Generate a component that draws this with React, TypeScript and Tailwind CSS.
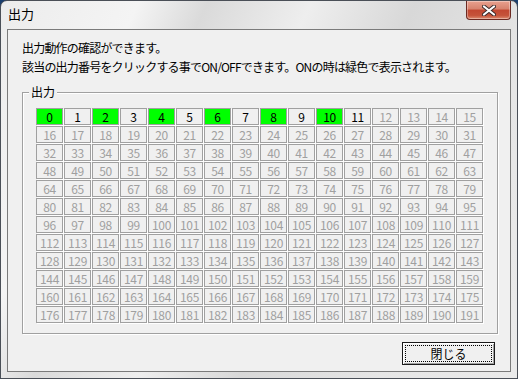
const FONT = { fontFamily: '"Noto Sans CJK JP", "Noto Sans", sans-serif' }

const ON = [0, 2, 4, 6, 8, 10]
const ENABLED = 12

function Cell({ n }: { n: number }) {
  const on = ON.includes(n)
  const enabled = n < ENABLED
  return (
    <div
      className={`flex h-[17px] items-center justify-center border border-[#a0a0a0] text-[12px] leading-none tracking-[-0.3px] shadow-[1px_1px_0_#fff] ${
        on ? 'bg-[#00ff00]' : 'bg-[#f0f0f0]'
      } ${enabled ? 'text-black' : 'text-[#a0a0a0]'}`}
    >
      {n}
    </div>
  )
}

function CloseGlyph() {
  return (
    <svg width="14" height="11" viewBox="0 0 14 11">
      <path d="M2 1.5 L12 9.5 M12 1.5 L2 9.5" stroke="#3a2a2a" strokeWidth="4" strokeLinecap="round" />
      <path d="M2 1.5 L12 9.5 M12 1.5 L2 9.5" stroke="#ffffff" strokeWidth="2.2" strokeLinecap="round" />
    </svg>
  )
}

export default function App() {
  const cells = Array.from({ length: 192 }, (_, i) => i)

  return (
    <div className="h-[379px] w-[518px] bg-[#1b3f6e]" style={FONT}>
      <div className="flex h-full w-full flex-col rounded-t-[7px] border border-[#4a4f57] bg-[linear-gradient(115deg,#ececec_0%,#f4f4f4_20%,#dadada_30%,#eeeeee_45%,#d8d8d8_60%,#e6e6e6_80%,#eaeaea_100%)]">
        {/* title bar */}
        <div className="flex h-[28px] items-start justify-between">
          <span className="pl-[7px] pt-[4px] text-[13px] leading-[18px] text-black">出力</span>
          <button className="mr-[6px] flex h-[19px] w-[45px] items-center justify-center rounded-b-[4px] border border-t-0 border-[#6b2a22] bg-[linear-gradient(#e9a18f_0%,#d7826d_45%,#c24731_50%,#c5533a_80%,#dd8b70_100%)] shadow-[inset_0_0_0_1px_rgba(255,255,255,0.35)]">
            <CloseGlyph />
          </button>
        </div>

        {/* client area */}
        <div className="mx-[6px] mb-[6px] flex flex-1 flex-col border border-[#7a7a7a] bg-[#f0f0f0] text-[12px] text-black">
          <div className="pl-[14px] pt-[8px] leading-[19px] tracking-[-0.8px]">
            <p>出力動作の確認ができます。</p>
            <p>該当の出力番号をクリックする事でON/OFFできます。ONの時は緑色で表示されます。</p>
          </div>

          {/* group box */}
          <div className="relative ml-[14px] mt-[16px] h-[242px] w-[476px] border border-[#a0a0a0] pl-[13px] pt-[15px] shadow-[inset_1px_1px_0_#fff,1px_1px_0_#fff]">
            <span className="absolute left-[6px] top-[-9px] bg-[#f0f0f0] px-[2px] text-[12px] leading-[16px]">出力</span>
            <div className="grid grid-cols-[repeat(16,27px)] gap-px">
              {cells.map((n) => (
                <Cell key={n} n={n} />
              ))}
            </div>
          </div>

          <div className="mr-[15px] mt-[8px] flex justify-end">
            <button className="flex h-[23px] w-[93px] items-center justify-center border border-[#1a1a1a] bg-[#f0f0f0] p-[2px] shadow-[inset_1px_1px_0_#fff,inset_-1px_-1px_0_#a0a0a0]">
              <span className="flex h-full w-full items-center justify-center border border-dotted border-black text-[12px] leading-none">
                閉じる
              </span>
            </button>
          </div>
        </div>
      </div>
    </div>
  )
}
